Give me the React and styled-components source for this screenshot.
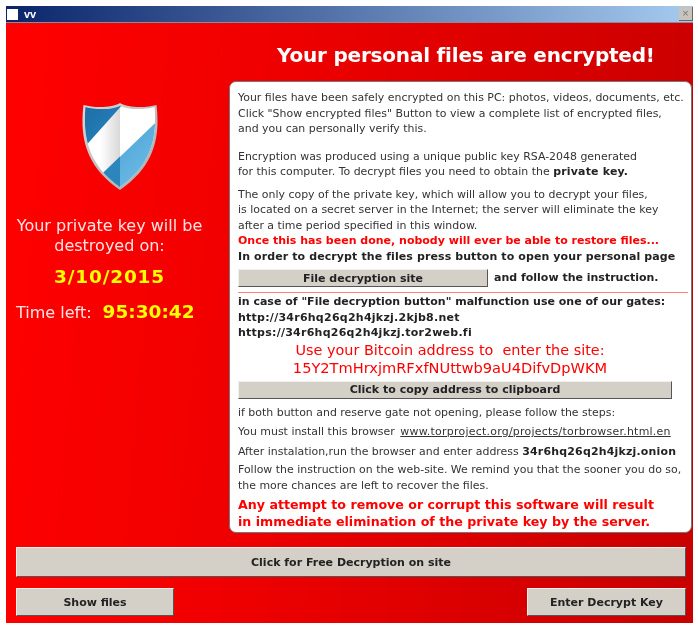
import styled, { createGlobalStyle } from 'styled-components';

const GlobalStyle = createGlobalStyle`
  html, body {
    margin: 0;
    padding: 0;
    background: #fff;
  }

  body {
    font-family: 'DejaVu Sans', 'Liberation Sans', sans-serif;
  }
`;

const Page = styled.div`
  width: 698px;
  height: 631px;
  padding: 6px 5px 8px 6px;
  box-sizing: border-box;
  overflow: hidden;
  filter: blur(0.4px);
`;

const Window = styled.div`
  height: 100%;
  display: flex;
  flex-direction: column;
`;

const TitleBar = styled.div`
  height: 16px;
  flex: none;
  display: flex;
  align-items: center;
  gap: 6px;
  padding-left: 1px;
  background: linear-gradient(90deg, #0a246a, #a6caef);
  border-bottom: 1px solid #8a8aa0;
`;

const TitleIcon = styled.span`
  width: 11px;
  height: 11px;
  background: #fff;
`;

const TitleText = styled.span`
  font: bold 11px 'Liberation Sans', sans-serif;
  color: #fff;
`;

const CloseButton = styled.span`
  margin-left: auto;
  width: 14px;
  height: 14px;
  background: #c8c4bc;
  color: #777;
  border-right: 1px solid #666;
  border-bottom: 1px solid #666;
  box-sizing: border-box;
  font: 11px/13px 'Liberation Sans', sans-serif;
  text-align: center;
`;

const Body = styled.div`
  flex: 1;
  display: flex;
  flex-direction: column;
  background: linear-gradient(95deg, #ff0000 0%, #f00000 35%, #c80000 100%);
  padding: 17px 5px 0 10px;
`;

const Heading = styled.h1`
  margin: 0 0 11px;
  padding-left: 261px;
  font: bold 20px/30px 'DejaVu Sans', sans-serif;
  letter-spacing: -0.2px;
  color: #fff;
  white-space: nowrap;
`;

const Columns = styled.div`
  display: flex;
  gap: 26px;
`;

const Sidebar = styled.aside`
  width: 187px;
  flex: none;
  display: flex;
  flex-direction: column;
  align-items: center;
  padding-top: 22px;
  color: #ffe4e4;
`;

const Shield = styled.svg`
  width: 76px;
  height: 87px;
  margin: 0 0 26px 20px;
`;

const ExpiryText = styled.div`
  font-size: 16px;
  line-height: 20px;
  text-align: center;
  white-space: nowrap;
`;

const DateText = styled.div`
  margin-top: 10px;
  font-size: 18.5px;
  line-height: 22px;
  letter-spacing: 0.8px;
  font-weight: bold;
  color: #ffff00;
`;

const Countdown = styled.div`
  margin-top: 13px;
  align-self: flex-start;
  display: flex;
  align-items: center;
  gap: 11px;
  font-size: 16px;
  white-space: nowrap;
`;

const Clock = styled.span`
  font-size: 18.5px;
  line-height: 22px;
  font-weight: bold;
  color: #ffff00;
`;

const Panel = styled.section`
  width: 463px;
  height: 452px;
  flex: none;
  box-sizing: border-box;
  background: #fff;
  border: 1px solid #777;
  border-radius: 7px;
  padding: 8px 0 0 8px;
  color: #333;
`;

const Line = styled.div`
  height: ${(p) => p.$h || 15.5}px;
  line-height: ${(p) => p.$h || 15.5}px;
  margin-top: ${(p) => p.$top || 0}px;
  font-size: ${(p) => p.$size || 10.95}px;
  font-weight: ${(p) => (p.$bold ? 'bold' : 'normal')};
  letter-spacing: ${(p) => p.$spacing || 0}px;
  color: ${(p) => p.$color || 'inherit'};
  text-align: ${(p) => (p.$center ? 'center' : 'left')};
  padding-right: ${(p) => (p.$center ? 29 : 0)}px;
  white-space: nowrap;
`;

const Strong = styled.b`
  color: #222;
  letter-spacing: 0.2px;
`;

const Link = styled.span`
  text-decoration: underline;
  letter-spacing: 0.25px;
  margin-left: 2px;
`;

const ButtonRow = styled.div`
  display: flex;
  align-items: center;
  gap: 6px;
  margin-top: ${(p) => p.$top || 5}px;
`;

const Button = styled.button`
  display: block;
  box-sizing: border-box;
  width: ${(p) => p.$w}px;
  height: ${(p) => p.$h}px;
  padding: 0;
  background: #d4d0c8;
  border: 1px solid;
  border-color: #f2f0ec #555 #555 #f2f0ec;
  border-radius: 0;
  color: #222;
  font: bold 11px 'DejaVu Sans', sans-serif;
`;

const Divider = styled.hr`
  width: 450px;
  height: 1px;
  margin: 5px 0 1px;
  border: 0;
  background: #ff8080;
`;

const Footer = styled.footer`
  margin-top: 14px;
  display: flex;
  flex-direction: column;
  gap: 11px;
  width: 670px;
`;

const FooterRow = styled.div`
  display: flex;
  justify-content: space-between;
`;

function ShieldIcon() {
  return (
    <Shield viewBox="0 0 76 88">
      <defs>
        <linearGradient id="rim" x1="0" y1="0" x2="1" y2="1">
          <stop offset="0" stopColor="#d8d8d8" />
          <stop offset="1" stopColor="#a9a9a9" />
        </linearGradient>
        <linearGradient id="dark" x1="0" y1="0" x2="1" y2="1">
          <stop offset="0" stopColor="#1c6da6" />
          <stop offset="1" stopColor="#2a86bd" />
        </linearGradient>
        <linearGradient id="light" x1="0" y1="0" x2="1" y2="1">
          <stop offset="0" stopColor="#3f9bd0" />
          <stop offset="1" stopColor="#74bfe8" />
        </linearGradient>
        <linearGradient id="shade" x1="0" y1="0" x2="1" y2="0">
          <stop offset="0" stopColor="#fff" />
          <stop offset="1" stopColor="#d8d8d8" />
        </linearGradient>
        <clipPath id="face">
          <path d="M38 3 C30 7 14 7 3 4 C1 30 3 60 38 85 C73 60 75 30 73 4 C62 7 46 7 38 3Z" />
        </clipPath>
      </defs>
      <path d="M38 0 C30 5 12 5 1 2 C-2 30 0 62 38 88 C76 62 78 30 75 2 C64 5 46 5 38 0Z" fill="url(#rim)" />
      <g clipPath="url(#face)">
        <rect width="76" height="88" fill="#fff" />
        <rect x="18" width="20" height="88" fill="url(#shade)" />
        <path d="M0 0 H42 L0 47Z" fill="url(#dark)" />
        <path d="M76 18 V88 H3 Z" fill="url(#light)" />
        <path d="M38 54 V88 H3 Z" fill="#2c86bb" />
      </g>
    </Shield>
  );
}

function App() {
  return (
    <>
      <GlobalStyle />
      <Page>
        <Window>
          <TitleBar>
            <TitleIcon />
            <TitleText>vv</TitleText>
            <CloseButton>×</CloseButton>
          </TitleBar>
          <Body>
            <Heading>Your personal files are encrypted!</Heading>
            <Columns>
              <Sidebar>
                <ShieldIcon />
                <ExpiryText>Your private key will be</ExpiryText>
                <ExpiryText>destroyed on:</ExpiryText>
                <DateText>3/10/2015</DateText>
                <Countdown>
                  Time left:
                  <Clock>95:30:42</Clock>
                </Countdown>
              </Sidebar>
              <Panel>
                <Line>Your files have been safely encrypted on this PC: photos, videos, documents, etc.</Line>
                <Line>Click "Show encrypted files" Button to view a complete list of encrypted files,</Line>
                <Line>and you can personally verify this.</Line>
                <Line $top={12}>Encryption was produced using a unique public key RSA-2048 generated</Line>
                <Line>
                  for this computer. To decrypt files you need to obtain the <Strong>private key.</Strong>
                </Line>
                <Line $top={7}>The only copy of the private key, which will allow you to decrypt your files,</Line>
                <Line>is located on a secret server in the Internet; the server will eliminate the key</Line>
                <Line>after a time period specified in this window.</Line>
                <Line $bold $color="#ff0000" $size={11}>Once this has been done, nobody will ever be able to restore files...</Line>
                <Line $bold $color="#222" $size={11} $spacing={0.1}>In order to decrypt the files press button to open your personal page</Line>
                <ButtonRow>
                  <Button $w={250} $h={18}>File decryption site</Button>
                  <Line $bold $color="#222" $size={11}>and follow the instruction.</Line>
                </ButtonRow>
                <Divider />
                <Line $bold $color="#222" $size={11}>in case of "File decryption button" malfunction use one of our gates:</Line>
                <Line $bold $color="#222" $size={11} $spacing={0.25}>http://34r6hq26q2h4jkzj.2kjb8.net</Line>
                <Line $bold $color="#222" $size={11} $spacing={0.25}>https://34r6hq26q2h4jkzj.tor2web.fi</Line>
                <Line $center $size={14.4} $h={17.5} $top={1} $color="#ff0000">Use your Bitcoin address to&nbsp; enter the site:</Line>
                <Line $center $size={14.6} $h={17.5} $color="#ff0000">15Y2TmHrxjmRFxfNUttwb9aU4DifvDpWKM</Line>
                <ButtonRow $top={4}>
                  <Button $w={434} $h={18}>Click to copy address to clipboard</Button>
                </ButtonRow>
                <Line $top={6}>if both button and reserve gate not opening, please follow the steps:</Line>
                <Line $top={4}>
                  You must install this browser <Link>www.torproject.org/projects/torbrowser.html.en</Link>
                </Line>
                <Line $top={4}>
                  After instalation,run the browser and enter address <Strong>34r6hq26q2h4jkzj.onion</Strong>
                </Line>
                <Line $top={3}>Follow the instruction on the web-site. We remind you that the sooner you do so,</Line>
                <Line>the more chances are left to recover the files.</Line>
                <Line $bold $size={12.65} $h={17} $top={3} $color="#ff0000">Any attempt to remove or corrupt this software will result</Line>
                <Line $bold $size={12.65} $h={17} $color="#ff0000">in immediate elimination of the private key by the server.</Line>
              </Panel>
            </Columns>
            <Footer>
              <Button $w={670} $h={30}>Click for Free Decryption on site</Button>
              <FooterRow>
                <Button $w={158} $h={28}>Show files</Button>
                <Button $w={159} $h={28}>Enter Decrypt Key</Button>
              </FooterRow>
            </Footer>
          </Body>
        </Window>
      </Page>
    </>
  );
}

export default App;
